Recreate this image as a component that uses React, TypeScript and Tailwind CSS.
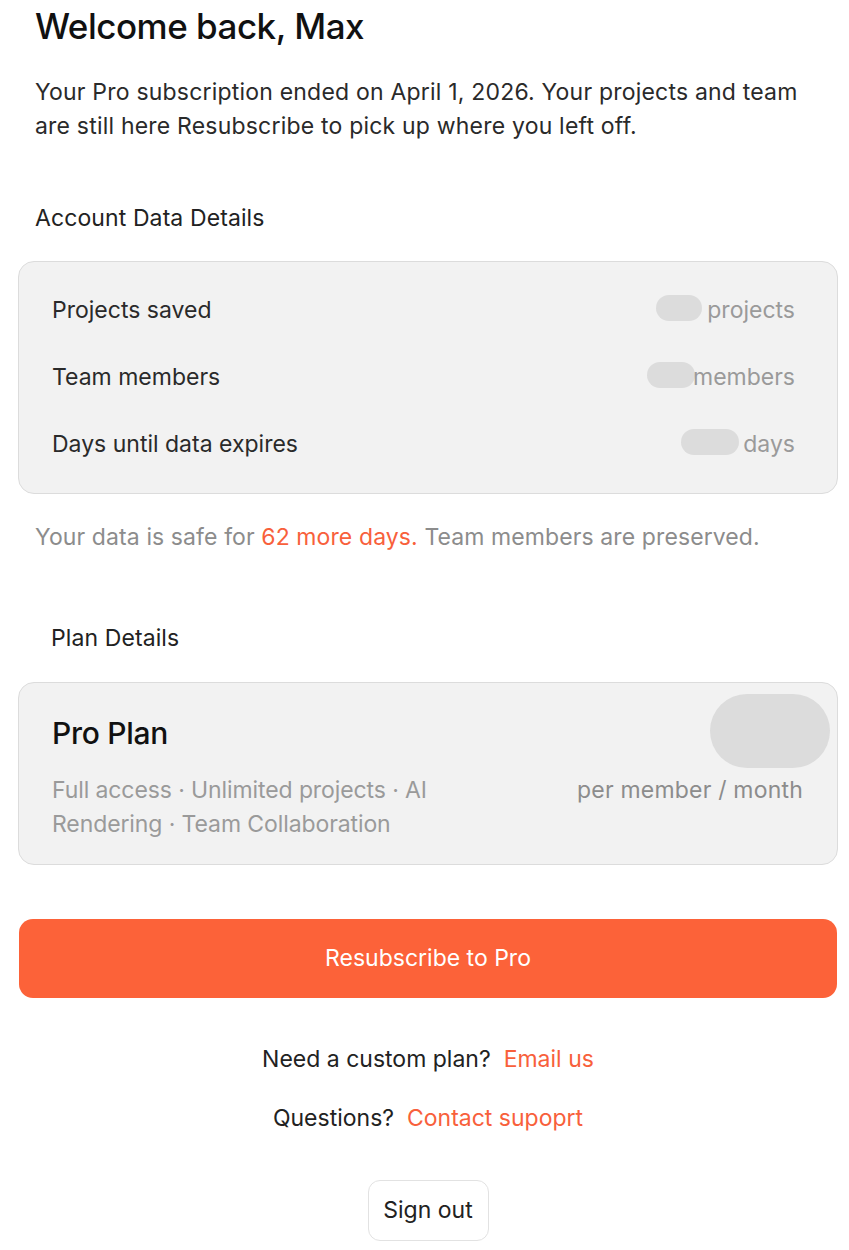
import React from 'react';

const Pill = ({ w, h = 'h-[26px]' }: { w: string; h?: string }) => (
  <span className={`inline-block ${w} ${h} rounded-full bg-[#dcdcdc]`} />
);

const App = () => {
  const rows = [
    { label: 'Projects saved', unit: 'projects', pill: 'w-[46px]', gap: 'mr-[5px]' },
    { label: 'Team members', unit: 'members', pill: 'w-[48px]', gap: '-mr-[2px]' },
    { label: 'Days until data expires', unit: 'days', pill: 'w-[58px]', gap: 'mr-[4px]' },
  ];

  return (
    <div className="min-h-[1250px] bg-white font-['Inter',sans-serif] text-[#1a1a1a]">
      <div className="w-[820px] ml-[18px] pt-[6px] pb-[12px]">
        <h1 className="pl-[17px] text-[35px] leading-[40px] font-medium tracking-[-0.5px] text-[#111]">
          Welcome back, Max
        </h1>
        <p className="pl-[17px] mt-[29px] text-[23px] leading-[34px] tracking-[0.2px] text-[#2a2a2a] pr-[36px]">
          Your Pro subscription ended on April 1, 2026. Your projects and team are still here Resubscribe to pick up where you left off.
        </p>

        <h2 className="pl-[17px] mt-[61px] text-[23px] leading-[28px] tracking-[0.1px] text-[#222]">
          Account Data Details
        </h2>
        <div className="mt-[29px] rounded-[16px] border border-[#dcdcdc] bg-[#f2f2f2] py-[15px] pl-[33px] pr-[42px]">
          {rows.map((r) => (
            <div key={r.label} className="flex h-[67px] items-center justify-between">
              <span className="text-[23px] text-[#2a2a2a]">{r.label}</span>
              <span className="flex items-center">
                <span className={r.gap}>
                  <Pill w={r.pill} />
                </span>
                <span className="text-[23px] text-[#9a9a9a]">{r.unit}</span>
              </span>
            </div>
          ))}
        </div>

        <p className="pl-[17px] mt-[29px] text-[23px] leading-[28px] tracking-[0.1px] text-[#8c8c8c]">
          Your data is safe for <span className="text-[#f8603b]">62 more days.</span> Team members are preserved.
        </p>

        <h2 className="pl-[33px] mt-[73px] text-[23px] leading-[28px] tracking-[0.1px] text-[#222]">
          Plan Details
        </h2>
        <div className="mt-[30px] flex justify-between rounded-[16px] border border-[#dcdcdc] bg-[#f2f2f2] pt-[11px] pb-[23px] pl-[33px] pr-[7px]">
          <div>
            <div className="mt-[21px] text-[30px] leading-[36px] font-medium tracking-[-0.3px] text-[#111]">Pro Plan</div>
            <p className="mt-[22px] w-[400px] text-[23px] leading-[34px] tracking-[-0.1px] text-[#9a9a9a]">
              Full access · Unlimited projects · AI Rendering · Team Collaboration
            </p>
          </div>
          <div className="flex flex-col items-end">
            <Pill w="w-[120px]" h="h-[74px]" />
            <span className="mt-[7px] mr-[27px] text-[23px] leading-[30px] tracking-[0.2px] text-[#8c8c8c]">per member / month</span>
          </div>
        </div>

        <button className="mt-[54px] ml-[1px] flex h-[79px] w-[818px] items-center justify-center rounded-[14px] bg-[#fc6239] text-[23px] text-white">
          Resubscribe to Pro
        </button>

        <p className="mt-[46px] text-center text-[23px] leading-[30px] text-[#222]">
          Need a custom plan?&nbsp; <span className="text-[#f8603b]">Email us</span>
        </p>
        <p className="mt-[29px] text-center text-[23px] leading-[30px] text-[#222]">
          Questions?&nbsp; <span className="text-[#f8603b]">Contact supoprt</span>
        </p>

        <div className="mt-[47px] flex justify-center">
          <button className="h-[61px] w-[121px] rounded-[12px] border border-[#e2e2e2] bg-white text-[23px] text-[#222]">
            Sign out
          </button>
        </div>
      </div>
    </div>
  );
};

export default App;
